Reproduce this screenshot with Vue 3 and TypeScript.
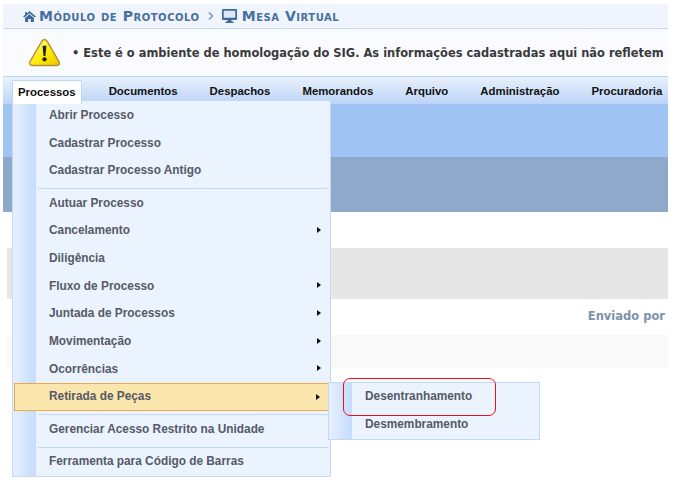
<template>
  <div class="page">
    <header class="crumbs">
      <svg class="home" viewBox="0 0 14 12" width="13" height="11"><path d="M7 0 L14 6 L12.6 7.2 L7 2.4 L1.4 7.2 L0 6 L2.2 4.1 V1 H4 V2.6 Z M7 3.6 L11.8 7.7 V12 H8.4 V8.6 H5.6 V12 H2.2 V7.7 Z" fill="#3d6a99"/></svg>
      <span class="crumb">Módulo de Protocolo</span>
      <svg class="chev" viewBox="0 0 6 8" width="6" height="8"><path d="M1 0.5 L4.5 4 L1 7.5" fill="none" stroke="#6d8fb6" stroke-width="1.4"/></svg>
      <svg class="monitor" viewBox="0 0 15 14" width="15" height="14">
        <rect x="1" y="1" width="13" height="9" fill="#dce8f8"/>
        <path fill-rule="evenodd" d="M1 0 H14 a1 1 0 0 1 1 1 V10 a1 1 0 0 1 -1 1 H9.5 V12.5 H11.5 V14 H3.5 V12.5 H5.5 V11 H1 a1 1 0 0 1 -1 -1 V1 a1 1 0 0 1 1 -1 Z M1.7 1.7 V8.8 H13.3 V1.7 Z" fill="#3d6a99"/>
      </svg>
      <span class="crumb">Mesa Virtual</span>
    </header>

    <section class="notice">
      <svg class="warn" viewBox="0 0 34 30" width="33" height="29">
        <defs>
          <linearGradient id="warnFill" x1="0" y1="0" x2="1" y2="1">
            <stop offset="0" stop-color="#fff8b0" />
            <stop offset="0.55" stop-color="#ffec00" />
            <stop offset="1" stop-color="#e8c400" />
          </linearGradient>
        </defs>
        <path d="M17 1.5 C18.5 1.5 19.3 2.5 20 3.8 L32 24.5 C33.2 26.8 32 28.5 29.5 28.5 H4.5 C2 28.5 0.8 26.8 2 24.5 L14 3.8 C14.7 2.5 15.5 1.5 17 1.5 Z" fill="url(#warnFill)" stroke="#b08f38" stroke-width="1.4"/>
        <path d="M15 8 H19 L18 18.5 H16 Z" fill="#222"/>
        <circle cx="17" cy="22" r="2.2" fill="#222"/>
      </svg>
      <span class="notice-text">• Este é o ambiente de homologação do SIG. As informações cadastradas aqui não refletem</span>
    </section>

    <nav class="menubar">
      <span v-for="t in tabs" :key="t" class="tab" :class="{ active: t === 'Processos' }">{{ t }}</span>
    </nav>

    <div class="band-blue"></div>
    <div class="band-steel"></div>
    <div class="band-grey"></div>
    <div class="table-head">Enviado por</div>
    <div class="band-light"></div>

    <ul class="menu main-menu">
      <template v-for="item in items" :key="item.label">
        <li v-if="item.sep" class="sep"></li>
        <li class="row" :class="{ hot: item.hot }">
          <span>{{ item.label }}</span>
          <i v-if="item.sub" class="arrow"></i>
        </li>
      </template>
    </ul>

    <ul class="menu sub-menu">
      <li class="row">Desentranhamento</li>
      <li class="row">Desmembramento</li>
    </ul>
    <div class="callout"></div>
  </div>
</template>

<script setup lang="ts">
interface Item {
  label: string
  sub?: boolean
  sep?: boolean
  hot?: boolean
}

const tabs = ['Processos', 'Documentos', 'Despachos', 'Memorandos', 'Arquivo', 'Administração', 'Procuradoria']

const items: Item[] = [
  { label: 'Abrir Processo' },
  { label: 'Cadastrar Processo' },
  { label: 'Cadastrar Processo Antigo' },
  { label: 'Autuar Processo', sep: true },
  { label: 'Cancelamento', sub: true },
  { label: 'Diligência' },
  { label: 'Fluxo de Processo', sub: true },
  { label: 'Juntada de Processos', sub: true },
  { label: 'Movimentação', sub: true },
  { label: 'Ocorrências', sub: true },
  { label: 'Retirada de Peças', sub: true, hot: true },
  { label: 'Gerenciar Acesso Restrito na Unidade', sep: true },
  { label: 'Ferramenta para Código de Barras', sep: true }
]
</script>

<style>
html, body { background: #fff; }
</style>

<style scoped>
.page {
  position: relative;
  width: 676px;
  height: 488px;
  overflow: hidden;
  background: #fff;
  padding: 4px 8px 0 3px;
  box-sizing: border-box;
  font-family: "Liberation Sans", Arial, sans-serif;
}

.crumbs {
  height: 24px;
  display: flex;
  align-items: center;
  padding-left: 20px;
  background: #f0f4fc;
  border-bottom: 1px solid #c6d9f5;
  color: #46709f;
  font-family: "DejaVu Sans", sans-serif;
  font-weight: bold;
  font-size: 14px;
}
.home { margin-right: 3px; }
.crumb { font-variant: small-caps; letter-spacing: 0.54px; white-space: nowrap; }
.chev { margin: 0 8px 0 8px; }
.monitor { margin-right: 5px; }

.notice {
  height: 47px;
  display: flex;
  align-items: center;
  padding-left: 25px;
  background: #fafbff;
  box-sizing: border-box;
}
.warn { flex: none; margin-right: 11px; }
.notice-text {
  font-family: "DejaVu Sans", sans-serif;
  font-weight: bold;
  font-size: 11.45px;
  color: #3a3a3a;
  white-space: nowrap;
}

.menubar {
  height: 28px;
  box-sizing: border-box;
  display: flex;
  align-items: center;
  padding-left: 15px;
  background: linear-gradient(#e8f1fd, #bcd4f6);
  border-top: 1px solid #bcd6f8;
  font-size: 11.4px;
  font-weight: bold;
  color: #111;
}
.tab { white-space: nowrap; margin-right: 32px; }
.tab.active {
  position: relative;
  z-index: 3;
  margin: 0 27px 0 -6px;
  padding: 0 5px;
  height: 23px;
  line-height: 22px;
  background: #fff;
  border: 1px solid #bcd6f8;
  border-bottom: 0;
  top: 1px;
}

.band-blue { height: 53px; background: #9fc3f2; }
.band-steel { height: 55px; background: #8fa9cb; }
.band-grey { height: 51px; margin: 36px 0 0 4px; background: #e6e6e6; }
.table-head {
  height: 36px;
  line-height: 35px;
  text-align: right;
  padding-right: 3px;
  font-family: "DejaVu Sans", sans-serif;
  font-weight: bold;
  font-size: 11.5px;
  color: #7c92ac;
}
.band-light { height: 33px; margin-left: 4px; background: #f9f9f9; }

.menu {
  position: absolute;
  margin: 0;
  padding: 0;
  list-style: none;
  box-sizing: border-box;
  background: linear-gradient(90deg, #e6f0fd 0, #c5dcfb 23px, #ebf3fe 23px);
  border: 1px solid #c3d9f8;
  font-size: 11.85px;
  font-weight: bold;
  color: #555a66;
}
.main-menu { left: 12px; top: 100px; width: 319px; height: 377px; z-index: 2; padding-top: 1px; }
.sub-menu { left: 328px; top: 382px; width: 212px; height: 58px; z-index: 2; }

.row {
  position: relative;
  height: 27.7px;
  line-height: 26px;
  padding-left: 36px;
  white-space: nowrap;
}
.main-menu .row:last-child { line-height: 27.5px; }
.row.hot {
  margin-left: 1px;
  padding-left: 34px;
  box-sizing: border-box;
  height: 28px;
  width: 314px;
  background: #fbe6ad;
  border: 1px solid #f0a848;
  border-right: 0;
  line-height: 24px;
}
.arrow {
  position: absolute;
  right: 9px;
  top: 9.5px;
  border-left: 4px solid #111;
  border-top: 3.5px solid transparent;
  border-bottom: 3.5px solid transparent;
}
.row.hot .arrow { right: 8px; top: 10px; }
.sep {
  height: 1px;
  margin: 3px 1px 0.5px 25px;
  background: #c3d9f8;
}

.callout {
  position: absolute;
  left: 343px;
  top: 378px;
  width: 153px;
  height: 38px;
  box-sizing: border-box;
  border: 1.3px solid #ec0f1c;
  border-radius: 7px;
  z-index: 3;
}
</style>
